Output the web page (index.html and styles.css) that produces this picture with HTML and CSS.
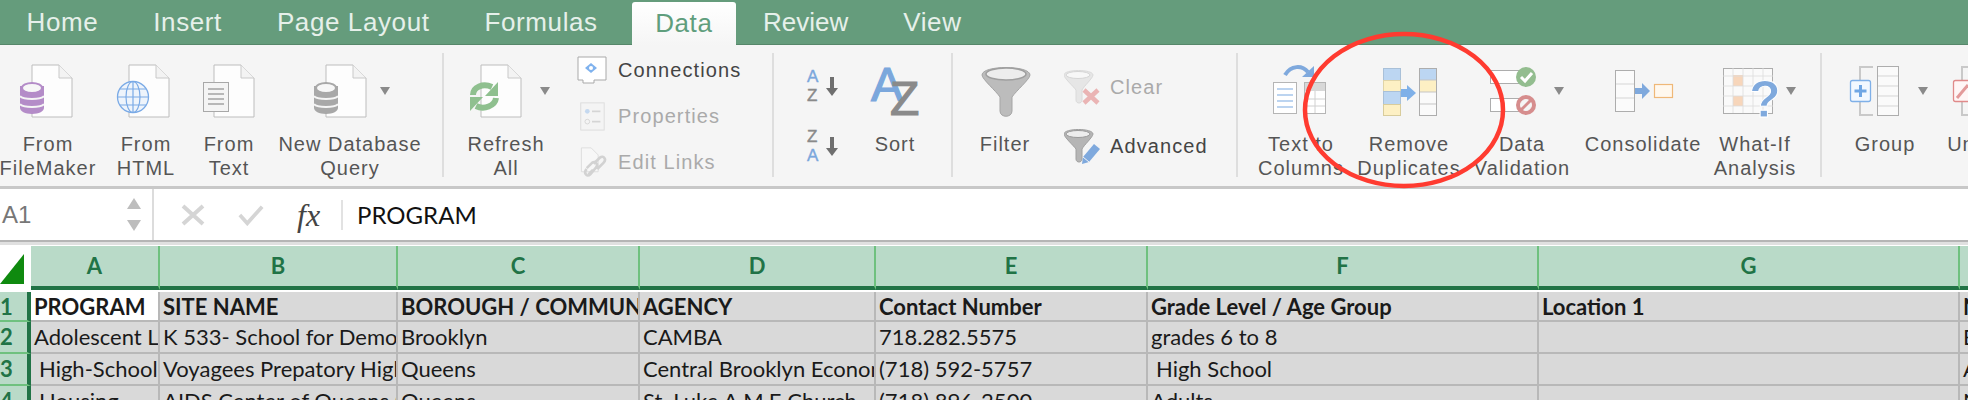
FILE: index.html
```html
<!DOCTYPE html>
<html lang="en">
<head>
    <meta charset="UTF-8">
    <meta name="viewport" content="width=device-width, initial-scale=1.0">
    <title>Excel Data Ribbon</title>
    <link rel="stylesheet" href="styles.css">
</head>
<body>

<svg class="defs" aria-hidden="true">
    <symbol id="page" viewBox="0 0 42 54">
        <path d="M1 1H28L41 14V53H1Z" fill="#fdfdfd" stroke="#bdbdbd"/>
        <path d="M28 1V14H41" fill="#f3f3f3" stroke="#c9c9c9"/>
    </symbol>
    <symbol id="db" viewBox="0 0 24 33">
        <path d="M0 5V27C0 30 5 33 12 33S24 30 24 27V5Z" fill="currentColor"/>
        <path d="M0 15C2 19 22 19 24 15M0 23C2 27 22 27 24 23" fill="none" stroke="#f5f5f5" stroke-width="2"/>
        <ellipse cx="12" cy="7" rx="10" ry="5" fill="#f7f7f7" stroke="currentColor" stroke-width="2"/>
    </symbol>
    <symbol id="caret" viewBox="0 0 10 8">
        <path d="M0 0H10L5 8Z" fill="#8a8a8a"/>
    </symbol>
</svg>

<div class="tabs">
    <div class="tab">Home</div>
    <div class="tab">Insert</div>
    <div class="tab">Page Layout</div>
    <div class="tab">Formulas</div>
    <div class="tab tab-active">Data</div>
    <div class="tab tab-tight">Review</div>
    <div class="tab">View</div>
</div>

<div class="ribbon">
    <div class="tool t-filemaker">
        <svg class="tool-icon" viewBox="0 48 96 84">
            <use href="#page" x="31" y="65" width="42" height="54"/>
            <use href="#db" x="20" y="82" width="24" height="33" class="c-purple"/>
        </svg>
        <div class="tool-label">From<br>FileMaker</div>
    </div>
    <div class="tool t-html">
        <svg class="tool-icon" viewBox="96 48 100 84">
            <use href="#page" x="128" y="65" width="42" height="54"/>
            <circle cx="133" cy="98" r="15.5" fill="#eef4fb" stroke="#7aaae6" stroke-width="1.3"/>
            <ellipse cx="133" cy="98" rx="7" ry="15.5" fill="none" stroke="#7aaae6" stroke-width="1.2"/>
            <path d="M133 82V113M118 98H149M120 90H146M120 106H146" stroke="#7aaae6" stroke-width="1.2"/>
        </svg>
        <div class="tool-label">From<br>HTML</div>
    </div>
    <div class="tool t-text">
        <svg class="tool-icon" viewBox="196 48 66 84">
            <use href="#page" x="213" y="65" width="42" height="54"/>
            <rect x="203.500" y="83.500" width="25" height="29" fill="#f4f4f4" stroke="#a8a8a8"/>
            <path d="M208 90H224M208 95H224M208 100H224M208 105H224" stroke="#a3a3a3" stroke-width="1.500"/>
        </svg>
        <div class="tool-label">From<br>Text</div>
    </div>
    <div class="tool t-query">
        <svg class="tool-icon" viewBox="262 48 176 84">
            <use href="#page" x="325" y="65" width="42" height="54"/>
            <use href="#db" x="314" y="82" width="24" height="33" class="c-grey"/>
            <use href="#caret" x="380" y="88" width="10" height="8"/>
        </svg>
        <div class="tool-label">New Database<br>Query</div>
    </div>
    <div class="sep sep-first"></div>

    <div class="tool t-refresh">
        <svg class="tool-icon" viewBox="444 48 124 84">
            <use href="#page" x="479" y="65" width="44" height="54"/>
            <path d="M473 96C473 88 483 84 492 88M496 99C495 107 484 111 476 107" fill="none" stroke="#8fc08f" stroke-width="6"/>
            <path d="M498 83V97H485ZM470 112V98H483Z" fill="#8fc08f"/>
            <use href="#caret" x="540" y="88" width="10" height="8"/>
        </svg>
        <div class="tool-label">Refresh<br>All</div>
    </div>
    <div class="small-col small-links">
        <div class="small-row">
            <svg class="small-icon" viewBox="0 0 30 28">
                <path d="M1 1H29V24H17V27H6V24H1Z" fill="#fff" stroke="#a9a9a9"/>
                <path d="M14 7L20 12L14 17L8 12Z" fill="#7fb2ee"/>
                <circle cx="14" cy="12" r="2" fill="#fff"/>
            </svg>
            <span>Connections</span>
        </div>
        <div class="small-row is-off">
            <svg class="small-icon" viewBox="0 0 30 32">
                <rect x="3" y="2" width="25" height="29" fill="#f4f4f4" stroke="#dcdcdc"/>
                <circle cx="10" cy="11" r="2.500" fill="#c4d8ef"/>
                <circle cx="10" cy="22" r="2.500" fill="none" stroke="#d5d5d5"/>
                <path d="M15 11H24M15 22H24" stroke="#d5d5d5" stroke-width="2"/>
            </svg>
            <span>Properties</span>
        </div>
        <div class="small-row is-off">
            <svg class="small-icon" viewBox="0 0 30 34">
                <path d="M3 1H14L22 9V28H3Z" fill="#f7f7f7" stroke="#dcdcdc"/>
                <path d="M11 31L16 26M17 19L24 12C28 9 32 14 28 18L21 25M9 24L15 18C19 15 23 20 19 24L13 31C9 35 5 29 9 25" fill="none" stroke="#d2d2d2" stroke-width="3"/>
            </svg>
            <span>Edit Links</span>
        </div>
    </div>
    <div class="sep"></div>

    <div class="tool t-az">
        <svg class="tool-icon-tall" viewBox="774 48 96 130">
            <text x="807" y="83" class="az-small az-blue">A</text>
            <text x="807" y="102" class="az-small az-grey">Z</text>
            <path d="M830 78H834V89H838L832 97L826 89H830Z" fill="#6f6f6f"/>
            <text x="807" y="143" class="az-small az-grey">Z</text>
            <text x="807" y="162" class="az-small az-blue">A</text>
            <path d="M830 138H834V149H838L832 157L826 149H830Z" fill="#6f6f6f"/>
        </svg>
    </div>
    <div class="tool t-sort">
        <svg class="tool-icon" viewBox="870 48 50 84">
            <text x="871" y="102" class="az-big az-blue">A</text>
            <text x="890" y="116" class="az-big az-grey">Z</text>
        </svg>
        <div class="tool-label">Sort</div>
    </div>
    <div class="sep sep-sort"></div>

    <div class="tool t-filter">
        <svg class="tool-icon" viewBox="953 48 104 84">
            <path d="M982 76C982 66 1030 66 1030 76C1030 80 1016 92 1012 98V112C1012 119 1000 119 1000 112V98C996 92 982 80 982 76Z" fill="#bcbcbc" stroke="#a5a5a5"/>
            <ellipse cx="1006" cy="75" rx="20" ry="6" fill="#ededed" stroke="#9f9f9f" stroke-width="1.500"/>
        </svg>
        <div class="tool-label">Filter</div>
    </div>
    <div class="small-col small-filter">
        <div class="small-row small-row-tall is-off">
            <svg class="small-icon-filter" viewBox="0 0 36 36">
                <path d="M0 5C0 -1 29 -1 29 5C29 8 20 16 18 20V30C18 34 12 34 12 30V20C9 16 0 8 0 5Z" fill="#e6e6e6" stroke="#dadada"/>
                <ellipse cx="14" cy="5" rx="12" ry="3.500" fill="#f7f7f7" stroke="#d5d5d5"/>
                <path d="M20 20L34 33M34 20L20 33" stroke="#eab4b4" stroke-width="4.500"/>
            </svg>
            <span>Clear</span>
        </div>
        <div class="small-row small-row-tall">
            <svg class="small-icon-filter" viewBox="0 0 36 36">
                <path d="M0 5C0 -1 29 -1 29 5C29 8 20 16 18 20V30C18 34 12 34 12 30V20C9 16 0 8 0 5Z" fill="#b5b5b5" stroke="#a0a0a0"/>
                <ellipse cx="14" cy="5" rx="12" ry="3.500" fill="#ededed" stroke="#9a9a9a"/>
                <path d="M30 15L36 20L25 33L18 35L19 28Z" fill="#7fa9dd"/>
                <path d="M19 28L25 33" stroke="#f5f5f5"/>
            </svg>
            <span>Advanced</span>
        </div>
    </div>
    <div class="sep"></div>

    <div class="tool t-columns">
        <svg class="tool-icon" viewBox="1238 48 126 84">
            <path d="M1285 76C1291 66 1302 66 1308 73" fill="none" stroke="#7fa9dd" stroke-width="4"/>
            <path d="M1314 67V78H1302Z" fill="#7fa9dd"/>
            <rect x="1273.500" y="83.500" width="23" height="31" fill="#fff" stroke="#b5b5b5"/>
            <path d="M1277 90H1293M1277 96H1293M1277 102H1293M1277 108H1293" stroke="#bcd4f0" stroke-width="2"/>
            <rect x="1304.500" y="83.500" width="21" height="31" fill="#fff" stroke="#b5b5b5"/>
            <rect x="1305" y="84" width="20" height="8" fill="#d8d8d8"/>
            <path d="M1305 100H1325M1305 107H1325M1315 92V114" stroke="#d0d0d0"/>
        </svg>
        <div class="tool-label">Text to<br>Columns</div>
    </div>
    <div class="tool t-remove">
        <svg class="tool-icon" viewBox="1364 48 90 84">
            <rect x="1383.500" y="69.500" width="17" height="12" fill="#bcd6f2" stroke="#a9c0d8"/>
            <rect x="1383.500" y="81.500" width="17" height="11" fill="#fdf0c4" stroke="#e0d4a8"/>
            <rect x="1383.500" y="92.500" width="17" height="13" fill="#bcd6f2" stroke="#a9c0d8"/>
            <rect x="1383.500" y="105.500" width="17" height="11" fill="#fdf0c4" stroke="#d8cc9c"/>
            <path d="M1401 90H1407V86L1416 94L1407 102V98H1401Z" fill="#7fb0e8"/>
            <rect x="1419.500" y="69.500" width="17" height="47" fill="#fafafa" stroke="#adadad"/>
            <rect x="1420" y="70" width="16" height="11" fill="#bcd6f2"/>
            <rect x="1420" y="81" width="16" height="12" fill="#fdf0c4"/>
            <path d="M1420 81H1436M1420 93H1436M1420 105H1436" stroke="#c5c5c5"/>
        </svg>
        <div class="tool-label">Remove<br>Duplicates</div>
    </div>
    <div class="tool t-validation">
        <svg class="tool-icon" viewBox="1454 48 136 84">
            <rect x="1490.500" y="71.500" width="33" height="13" fill="#fff" stroke="#adadad"/>
            <circle cx="1526" cy="78" r="10" fill="#93bd8f"/>
            <path d="M1521 78L1525 82L1532 74" fill="none" stroke="#fff" stroke-width="3"/>
            <rect x="1490.500" y="99.500" width="33" height="13" fill="#fff" stroke="#adadad"/>
            <circle cx="1526" cy="106" r="10" fill="#d68d8d"/>
            <circle cx="1526" cy="106" r="5.500" fill="#f5f5f5" stroke="#f5f5f5"/>
            <path d="M1521 111L1531 101" stroke="#d68d8d" stroke-width="3"/>
            <use href="#caret" x="1554" y="88" width="10" height="8"/>
        </svg>
        <div class="tool-label">Data<br>Validation</div>
    </div>
    <div class="tool t-consolidate">
        <svg class="tool-icon" viewBox="1590 48 106 84">
            <rect x="1615.500" y="71.500" width="19" height="41" fill="#fbfbfb" stroke="#adadad"/>
            <path d="M1616 85H1634M1616 99H1634" stroke="#d5d5d5"/>
            <path d="M1635 89H1642V84L1650 92L1642 100V95H1635Z" fill="#7fa9dd"/>
            <rect x="1654.500" y="85.500" width="18" height="13" fill="#fff8ee" stroke="#efb878" stroke-width="1.200"/>
        </svg>
        <div class="tool-label">Consolidate</div>
    </div>
    <div class="tool t-whatif">
        <svg class="tool-icon" viewBox="1696 48 118 84">
            <rect x="1723.500" y="69.500" width="49" height="45" fill="#fafafa" stroke="#adadad"/>
            <rect x="1733" y="76" width="10" height="11" fill="#f7d6bb"/>
            <rect x="1733" y="97" width="10" height="10" fill="#f7d6bb"/>
            <path d="M1723 77H1773M1723 87H1773M1723 97H1773M1723 107H1773M1733 69V114M1743 69V114M1753 69V114M1763 69V114" stroke="#dcdcdc" stroke-width="0.800"/>
            <text x="1749" y="118" class="help-mark">?</text>
            <use href="#caret" x="1786" y="88" width="10" height="8"/>
        </svg>
        <div class="tool-label">What-If<br>Analysis</div>
    </div>
    <div class="sep sep-outline"></div>

    <div class="tool t-group">
        <svg class="tool-icon" viewBox="1822 48 126 84">
            <path d="M1873 68H1860V116H1873" fill="none" stroke="#c9c9c9" stroke-width="2"/>
            <rect x="1877.500" y="67.500" width="21" height="49" fill="#fafafa" stroke="#adadad"/>
            <path d="M1878 77H1898M1878 87H1898M1878 97H1898M1878 107H1898" stroke="#d5d5d5"/>
            <rect x="1850.500" y="81.500" width="20" height="21" rx="2" fill="#f2f8ff" stroke="#7fb0e8" stroke-width="1.300"/>
            <path d="M1860.500 86V98M1854.500 92H1866.500" stroke="#6fa6e4" stroke-width="3"/>
            <use href="#caret" x="1918" y="88" width="10" height="8"/>
        </svg>
        <div class="tool-label">Group</div>
    </div>
    <div class="tool t-ungroup">
        <svg class="tool-icon" viewBox="1948 48 82 84">
            <path d="M1975 68H1962V116H1975" fill="none" stroke="#c9c9c9" stroke-width="2"/>
            <rect x="1953.500" y="81.500" width="20" height="21" rx="2" fill="#fff6f6" stroke="#e08a8a" stroke-width="1.300"/>
            <path d="M1957 99L1968 86" stroke="#e39a9a" stroke-width="3"/>
        </svg>
        <div class="tool-label">Ungroup</div>
    </div>
</div>

<div class="formula-bar">
    <div class="name-box">
        <span>A1</span>
        <div class="spinner">
            <svg class="spin-arrow" viewBox="0 0 14 11"><path d="M7 0L14 11H0Z"/></svg>
            <svg class="spin-arrow" viewBox="0 0 14 11"><path d="M0 0H14L7 11Z"/></svg>
        </div>
    </div>
    <div class="formula-tools">
        <svg class="fx-btn" viewBox="0 0 24 22"><path d="M2 2L22 20M22 2L2 20" stroke="#d5d5d5" stroke-width="4"/></svg>
        <svg class="fx-btn" viewBox="0 0 28 22"><path d="M2 11L10 20L26 2" fill="none" stroke="#d5d5d5" stroke-width="4"/></svg>
        <span class="fx-label">fx</span>
    </div>
    <div class="formula-text">PROGRAM</div>
</div>

<div class="sheet">
    <div class="corner"><div class="corner-mark"></div></div>
    <div class="col-head">A</div>
    <div class="col-head">B</div>
    <div class="col-head">C</div>
    <div class="col-head">D</div>
    <div class="col-head">E</div>
    <div class="col-head">F</div>
    <div class="col-head">G</div>
    <div class="col-head"></div>

    <div class="row-head">1</div>
    <div class="cell cell-bold cell-active">PROGRAM</div>
    <div class="cell cell-bold">SITE NAME</div>
    <div class="cell cell-bold">BOROUGH / COMMUNITY</div>
    <div class="cell cell-bold">AGENCY</div>
    <div class="cell cell-bold">Contact Number</div>
    <div class="cell cell-bold">Grade Level / Age Group</div>
    <div class="cell cell-bold">Location 1</div>
    <div class="cell cell-bold">N</div>

    <div class="row-head">2</div>
    <div class="cell">Adolescent Literacy</div>
    <div class="cell">K 533- School for Democracy</div>
    <div class="cell">Brooklyn</div>
    <div class="cell">CAMBA</div>
    <div class="cell">718.282.5575</div>
    <div class="cell">grades 6 to 8</div>
    <div class="cell"></div>
    <div class="cell">B</div>

    <div class="row-head">3</div>
    <div class="cell cell-indent">High-School</div>
    <div class="cell">Voyagees Prepatory High</div>
    <div class="cell">Queens</div>
    <div class="cell">Central Brooklyn Economic</div>
    <div class="cell">(718) 592-5757</div>
    <div class="cell cell-indent">High School</div>
    <div class="cell"></div>
    <div class="cell">A</div>

    <div class="row-head">4</div>
    <div class="cell cell-indent">Housing</div>
    <div class="cell">AIDS Center of Queens (</div>
    <div class="cell">Queens</div>
    <div class="cell">St. Luke A.M.E Church</div>
    <div class="cell">(718) 896-2500</div>
    <div class="cell">Adults</div>
    <div class="cell"></div>
    <div class="cell">N</div>
</div>

<svg class="red-circle" viewBox="0 0 210 162">
    <ellipse cx="105" cy="81" rx="99" ry="76" fill="none" stroke="#ff3b30" stroke-width="4.500"/>
</svg>

</body>
</html>
```

FILE: styles.css
```css
html {
    overflow: hidden;
}

body {
    font-family: "Liberation Sans", Arial, sans-serif;
    background-color: #fff;
    margin: 0;
    padding: 0;
    width: 1968px;
    height: 400px;
    overflow: hidden;
    position: relative;
}

.defs {
    display: none;
}

.c-purple {
    color: #b48cc8;
}

.c-grey {
    color: #a8a8a8;
}

/* tabs */
.tabs {
    display: flex;
    height: 45px;
    background-color: #659c7c;
    border-bottom: 1px solid #56876a;
    box-sizing: border-box;
}

.tab {
    padding: 0 27.5px;
    font-size: 26px;
    letter-spacing: 0.6px;
    line-height: 44px;
    color: #e6f0ea;
}

.tab:first-child {
    margin-left: -1px;
}

.tab-active {
    height: 44px;
    margin: 2px 0 0 7px;
    padding: 0 23px;
    line-height: 42px;
    color: #5f9e7d;
    background: linear-gradient(#fff, #f5f5f5);
    border-radius: 3px 3px 0 0;
}

.tab-tight {
    letter-spacing: 0;
}

/* ribbon */
.ribbon {
    display: flex;
    height: 139px;
    padding-top: 2px;
    background-color: #f5f5f5;
    border-bottom: 3px solid #c8c8c8;
    overflow: hidden;
}

.tool {
    flex: none;
    text-align: center;
}

.tool-icon {
    display: block;
    width: 100%;
    height: 84px;
}

.tool-icon-tall {
    display: block;
    width: 100%;
    height: 130px;
}

/* negative margins keep long labels centred on a narrower tool */
.tool-label {
    margin: 0 -20px;
    padding-top: 1px;
    font-size: 20px;
    line-height: 24px;
    letter-spacing: 1px;
    color: #555;
    white-space: nowrap;
}

.t-filemaker { width: 96px; }
.t-html { width: 100px; }
.t-text { width: 66px; }
.t-query { width: 176px; }
.t-refresh { width: 124px; }
.t-az { width: 96px; }
.t-sort { width: 50px; }
.t-filter { width: 104px; }
.t-columns { width: 126px; }
.t-remove { width: 90px; }
.t-validation { width: 136px; }
.t-consolidate { width: 106px; }
.t-whatif { width: 118px; }
.t-group { width: 126px; }
.t-ungroup { width: 82px; }

.sep {
    flex: none;
    width: 2px;
    height: 124px;
    margin-top: 6px;
    background-color: #dedede;
}

.sep-first { margin-left: 4px; }
.sep-sort { margin-left: 31px; }
.sep-outline { margin-left: 6px; }

.small-col {
    flex: none;
    display: flex;
    flex-direction: column;
}

.small-links {
    width: 195px;
    margin-left: 9px;
}

.small-filter {
    width: 172px;
    margin-left: 7px;
    padding-top: 11px;
}

.small-row {
    display: flex;
    align-items: center;
    gap: 11px;
    height: 46px;
    font-size: 20px;
    letter-spacing: 1.1px;
    color: #444;
    white-space: nowrap;
}

.small-row-tall {
    height: 59px;
    gap: 10px;
}

.small-row.is-off {
    color: #aaa;
}

.small-icon {
    flex: none;
    width: 30px;
    height: 30px;
}

.small-icon-filter {
    flex: none;
    width: 36px;
    height: 36px;
}

.az-small {
    font-size: 17px;
}

.az-big {
    font-size: 48px;
}

.az-blue {
    fill: #7ba7dc;
    stroke: #7ba7dc;
    stroke-width: 0.4px;
}

.az-grey {
    fill: #8a8a8a;
    stroke: #8a8a8a;
    stroke-width: 0.4px;
}

.az-big.az-blue,
.az-big.az-grey {
    stroke-width: 1.2px;
}

.help-mark {
    font-size: 52px;
    font-weight: bold;
    fill: #7fa9dd;
    stroke: #fff;
    stroke-width: 1px;
}

/* formula bar */
.formula-bar {
    display: flex;
    align-items: center;
    height: 53px;
    box-sizing: border-box;
    border-bottom: 2px solid #b5b5b5;
}

.name-box {
    flex: none;
    display: flex;
    justify-content: space-between;
    align-items: center;
    width: 154px;
    height: 100%;
    padding: 0 11px 0 2px;
    box-sizing: border-box;
    border-right: 2px solid #dcdcdc;
    font-size: 24px;
    color: #777;
}

.spinner {
    display: flex;
    flex-direction: column;
    gap: 11px;
}

.spin-arrow {
    display: block;
    width: 14px;
    height: 11px;
    fill: #bdbdbd;
}

.formula-tools {
    flex: none;
    display: flex;
    align-items: center;
    gap: 32px;
    height: 100%;
    padding-left: 26px;
    box-sizing: border-box;
}

.fx-btn {
    height: 22px;
    width: 26px;
}

.fx-label {
    margin-left: 1px;
    padding-right: 21px;
    font-family: "Liberation Serif", serif;
    font-style: italic;
    font-size: 32px;
    line-height: 30px;
    color: #444;
    border-right: 2px solid #e2e2e2;
}

.formula-text {
    padding-left: 14px;
    font-family: Lato, sans-serif;
    font-size: 24px;
    color: #111;
}

/* sheet */
.sheet {
    display: grid;
    grid-template-columns: 31px 129px 238px 242px 236px 272px 391px 421px 100px;
    grid-template-rows: 46px 30px;
    grid-auto-rows: 32px;
    height: 155px;
    overflow: hidden;
    padding-top: 1px;
    border-top: 3px solid #e0e0e0;
    font-family: Lato, sans-serif;
    font-size: 22px;
    color: #1a1a1a;
}

.corner {
    box-sizing: border-box;
    padding-top: 8px;
    background-color: #fff;
}

.corner-mark {
    width: 24px;
    height: 30px;
    background-color: #0f8a0f;
    clip-path: polygon(100% 0, 100% 100%, 0 100%);
}

.col-head {
    box-sizing: border-box;
    height: 44px;
    text-align: center;
    line-height: 40px;
    font-weight: bold;
    color: #217346;
    background-color: #b9dac8;
    border-right: 2px solid #6fc17f;
    border-bottom: 4px solid #217346;
}

.row-head {
    box-sizing: border-box;
    line-height: 30px;
    font-weight: bold;
    color: #217346;
    background-color: #b9dac8;
    border-right: 4px solid #217346;
    border-bottom: 2px solid #6fc17f;
}

.cell {
    box-sizing: border-box;
    padding-left: 3px;
    line-height: 30px;
    white-space: nowrap;
    overflow: hidden;
    background-color: #d9d9d9;
    border-right: 2px solid #b8b8b8;
    border-bottom: 2px solid #b8b8b8;
}

.cell-bold {
    font-weight: bold;
}

.cell-active {
    background-color: #fff;
}

.cell-indent {
    padding-left: 8px;
}

/* annotation drawn over the ribbon */
.red-circle {
    position: absolute;
    left: 1299px;
    top: 29px;
    width: 210px;
    height: 162px;
}
```
